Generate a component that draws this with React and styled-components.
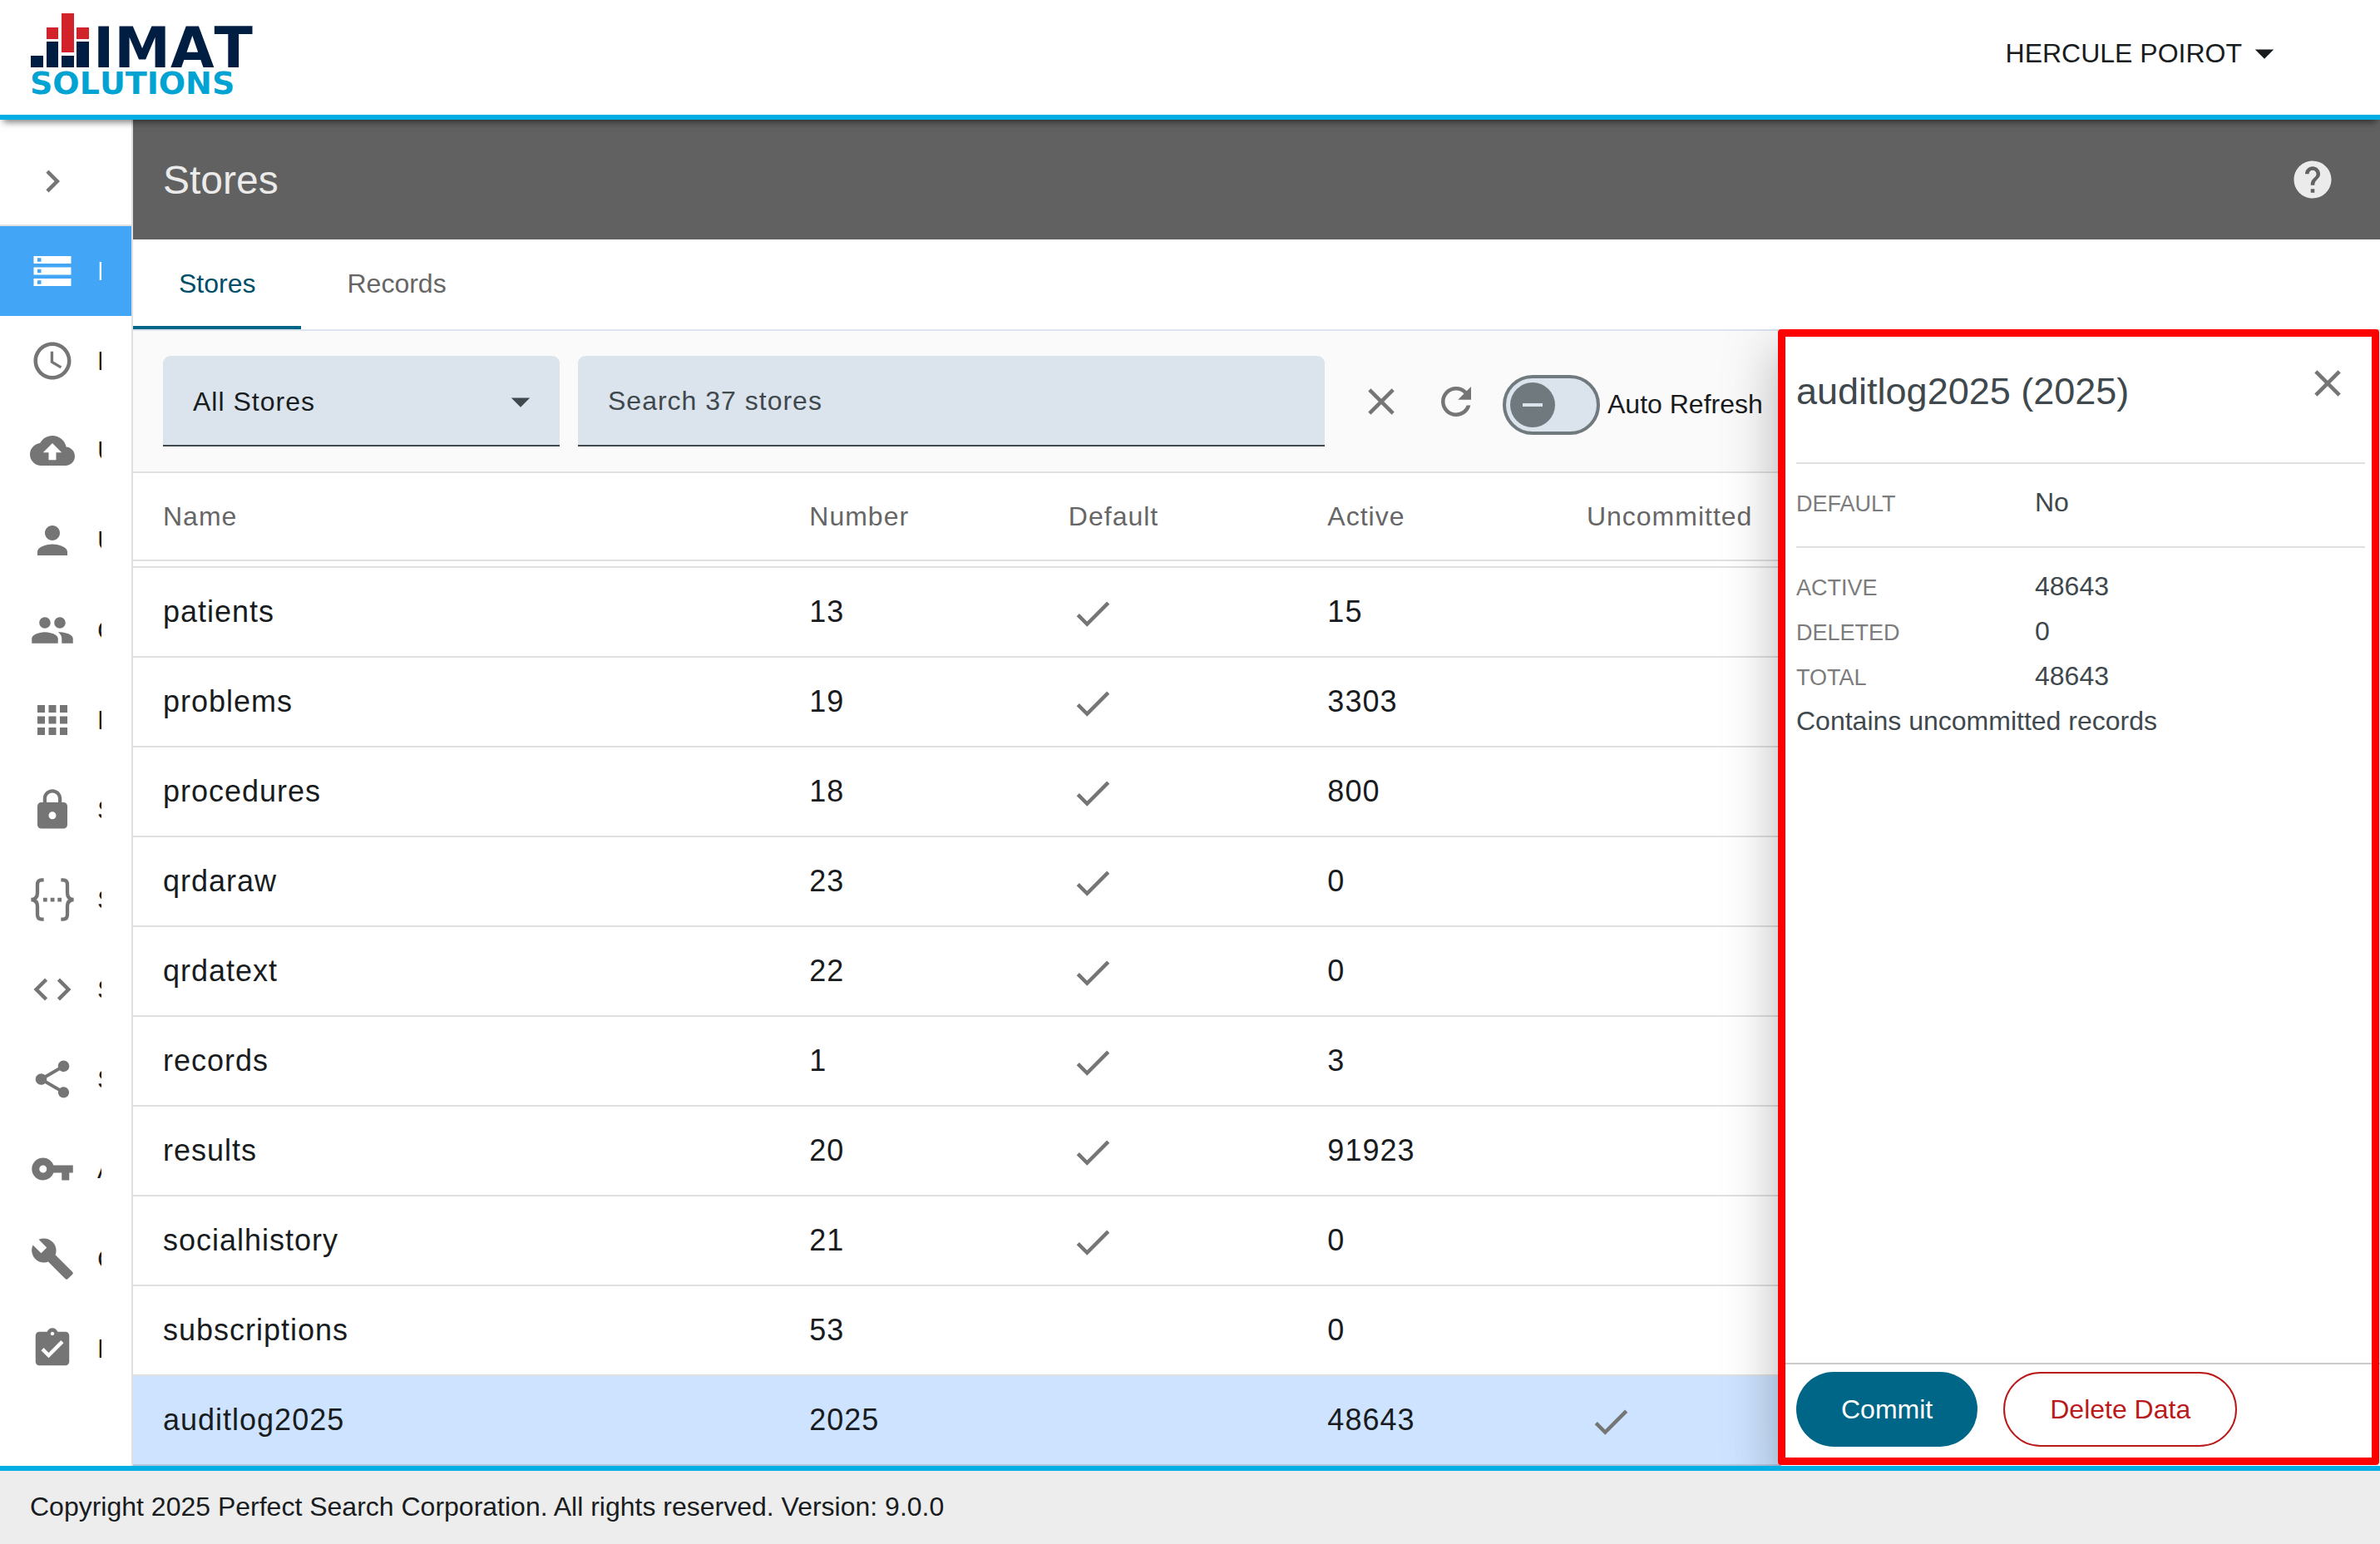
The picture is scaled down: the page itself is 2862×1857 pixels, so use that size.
import { useState } from "react";
import styled, { createGlobalStyle, css } from "styled-components";
import {
  MdAccessTime,
  MdApps,
  MdArrowDropDown,
  MdAssignmentTurnedIn,
  MdBuild,
  MdCheck,
  MdChevronRight,
  MdClose,
  MdCloudUpload,
  MdCode,
  MdHelp,
  MdLock,
  MdPeople,
  MdPerson,
  MdRefresh,
  MdShare,
  MdStorage,
  MdVpnKey,
} from "react-icons/md";

const GlobalStyles = createGlobalStyle`
  :root {
    --color-text: #191c1e;
    --color-text-soft: #3f484d;
    --color-label: #7c7c7c;
    --color-icon: #757575;
    --color-line: #e0e0e0;
    --color-field: #dbe4ec;
    --color-brand: #00aee3;
    --color-primary: #006687;
    --color-danger: #ba1a1a;
  }

  *,
  *::before,
  *::after {
    box-sizing: border-box;
  }

  body {
    margin: 0;
    background-color: #fff;
    color: var(--color-text);
    font-family: "Liberation Sans", Arial, sans-serif;
    font-size: 32px;
  }

  button,
  input,
  select {
    margin: 0;
    padding: 0;
    border: none;
    background: none;
    color: inherit;
    font: inherit;
    cursor: pointer;
  }
`;

const StyledApp = styled.div`
  display: flex;
  flex-direction: column;
  min-height: 100vh;
`;

const Header = styled.header`
  position: relative;
  z-index: 2;
  display: flex;
  justify-content: space-between;
  height: 144px;
  padding: 0 112px 0 36px;
  border-bottom: 6px solid var(--color-brand);
  background-color: #fff;
  box-shadow: 0 7px 8px -4px rgba(0, 0, 0, 0.5);
`;

const LogoLink = styled.a`
  display: flex;
  align-items: center;
`;

const UserButton = styled.button`
  display: flex;
  align-items: center;
  height: 128px;
`;

const Body = styled.div`
  display: flex;
  flex: 1;
`;

const Sidebar = styled.nav`
  flex-shrink: 0;
  width: 160px;
  border-right: 2px solid var(--color-line);
`;

const ExpandButton = styled.button`
  display: flex;
  align-items: center;
  width: 100%;
  height: 128px;
  padding: 22px 0 0 36px;
  border-bottom: 2px solid var(--color-line);
  color: var(--color-icon);
`;

const NavLink = styled.a`
  display: flex;
  align-items: center;
  gap: 27px;
  height: 108px;
  padding: 0 36px;
  color: var(--color-text);
  text-decoration: none;

  svg {
    flex-shrink: 0;
    color: var(--color-icon);
  }

  ${(props) =>
    props.$active &&
    css`
      background-color: #42a5f5;
      color: #fff;

      svg {
        color: #fff;
      }
    `}
`;

const NavText = styled.span`
  flex: 1;
  min-width: 0;
  overflow: hidden;
`;

const Content = styled.main`
  display: flex;
  flex: 1;
  flex-direction: column;
  min-width: 0;
`;

const TitleBar = styled.div`
  display: flex;
  align-items: center;
  justify-content: space-between;
  height: 144px;
  padding: 0 54px 0 36px;
  background-color: #616161;
  color: #ebebeb;
`;

const Title = styled.h1`
  margin: 0;
  font-size: 48px;
  font-weight: 400;
`;

const PlainButton = styled.button`
  display: flex;
`;

const Tabs = styled.div`
  display: flex;
  height: 110px;
  border-bottom: 2px solid var(--color-field);
`;

const Tab = styled.button`
  padding: 0 55px 2px;
  border-top: 4px solid transparent;
  border-bottom: 4px solid
    ${(props) => (props.$active ? "var(--color-primary)" : "transparent")};
  color: ${(props) => (props.$active ? "#004e68" : "#666")};
`;

const Workspace = styled.section`
  position: relative;
  flex: 1;
`;

const Toolbar = styled.div`
  display: flex;
  align-items: center;
  height: 171px;
  padding: 0 36px;
  border-bottom: 2px solid var(--color-line);
  background-color: #fafafa;
`;

const fieldStyles = css`
  height: 109px;
  padding: 2px 36px 0;
  border-bottom: 2px solid var(--color-text-soft);
  border-radius: 9px 9px 0 0;
  background-color: var(--color-field);
  letter-spacing: 1px;
`;

const SelectBox = styled.div`
  display: grid;
  flex: 0 1 477px;
  align-items: center;
  margin-right: 22px;

  & > * {
    grid-area: 1 / 1;
  }

  svg {
    justify-self: end;
    margin-right: 20px;
    color: var(--color-text-soft);
    pointer-events: none;
  }
`;

const Select = styled.select`
  ${fieldStyles}
  width: 100%;
  appearance: none;
`;

const SearchInput = styled.input`
  ${fieldStyles}
  flex: 0 1 898px;
  min-width: 0;
  margin-right: 23px;
  cursor: text;

  &::placeholder {
    color: var(--color-text-soft);
    opacity: 1;
  }
`;

const IconButton = styled.button`
  display: flex;
  flex: 0 0 90px;
  align-items: center;
  justify-content: center;
  height: 90px;
  color: var(--color-icon);
`;

const SwitchLabel = styled.label`
  display: flex;
  align-items: center;
  gap: 9px;
  margin-left: 11px;
  padding-top: 8px;
  white-space: nowrap;
  cursor: pointer;
`;

const Switch = styled.input`
  display: flex;
  align-items: center;
  width: 117px;
  height: 72px;
  padding: 0 5px;
  border: 4px solid #6f797e;
  border-radius: 36px;
  background-color: var(--color-field);
  appearance: none;

  &::before {
    content: "";
    width: 54px;
    height: 54px;
    border-radius: 50%;
    background: linear-gradient(var(--color-field), var(--color-field)) center /
      24px 4px no-repeat #6f797e;
  }

  &:checked {
    justify-content: flex-end;
  }
`;

const Table = styled.table`
  width: 100%;
  border-spacing: 0;
  table-layout: fixed;
`;

const HeadCell = styled.th`
  width: ${(props) => props.$width};
  height: 106px;
  padding: 0;
  border-bottom: 2px solid var(--color-line);
  color: #666;
  font-weight: 400;
  letter-spacing: 1px;
  text-align: left;

  &:first-child {
    padding-left: 36px;
  }
`;

const Row = styled.tr`
  background-color: ${(props) => (props.$selected ? "#cde3ff" : "#fff")};
`;

const Cell = styled.td`
  height: 108px;
  padding: 0;
  border-bottom: 2px solid rgba(0, 0, 0, 0.12);
  font-size: 36px;
  letter-spacing: 1px;

  &:first-child {
    padding-left: 36px;
  }

  svg {
    display: block;
    margin: 4px 0 0 2px;
    color: var(--color-icon);
  }
`;

// What is left of the row scrolled under the table head
const ScrolledCell = styled.td`
  height: 8px;
  padding: 0;
  border-bottom: 2px solid var(--color-line);
`;

const Panel = styled.aside`
  position: absolute;
  top: 0;
  right: 0;
  bottom: 0;
  display: flex;
  flex-direction: column;
  width: 720px;
  background-color: #fff;
  box-shadow: 0 18px 22px -11px rgba(0, 0, 0, 0.2),
    0 36px 54px 4px rgba(0, 0, 0, 0.14), 0 14px 68px 11px rgba(0, 0, 0, 0.12);
  clip-path: inset(-2px 0 0 -120px);
  color: var(--color-text-soft);

  &::after {
    content: "";
    position: absolute;
    inset: -2px 1px 1px -4px;
    border: 9px solid #f00;
    border-radius: 4px;
    pointer-events: none;
  }
`;

const PanelBody = styled.div`
  flex: 1;
  padding: 0 18px;
`;

const PanelHeader = styled.div`
  display: flex;
  align-items: flex-start;
  justify-content: space-between;
  height: 160px;
  padding: 36px 18px 0 0;
  border-bottom: 2px solid var(--color-line);

  button {
    color: var(--color-icon);
  }
`;

const PanelTitle = styled.h2`
  margin: 0;
  padding-top: 10px;
  font-size: 45px;
  font-weight: 400;
  line-height: 54px;
`;

const Details = styled.dl`
  margin: 0;
  padding-top: 19px;

  &:not(:last-of-type) {
    padding-bottom: 26px;
    border-bottom: 2px solid var(--color-line);
  }
`;

const Detail = styled.div`
  display: grid;
  grid-template-columns: 287px 1fr;
  align-items: center;
  height: 54px;

  dt {
    padding-top: 5px;
    color: var(--color-label);
    font-size: 27px;
  }

  dd {
    margin: 0;
  }
`;

const Note = styled.p`
  margin: 0;
  line-height: 54px;
`;

const PanelFooter = styled.div`
  display: flex;
  gap: 31px;
  height: 124px;
  padding: 9px 18px;
  border-top: 2px solid #c8cacb;
`;

const Button = styled.button`
  height: 90px;
  padding: 0 54px;
  border-radius: 45px;
  background-color: var(--color-primary);
  color: #fff;
  white-space: nowrap;

  ${(props) =>
    props.$variant === "danger" &&
    css`
      border: 2px solid var(--color-danger);
      background-color: #fff;
      color: var(--color-danger);
    `}
`;

const Footer = styled.footer`
  position: relative;
  display: flex;
  align-items: center;
  height: 94px;
  padding: 0 36px 2px;
  border-top: 6px solid var(--color-brand);
  background-color: #ededed;
`;

const LogoText = styled.text`
  font-family: "DejaVu Sans", Verdana, sans-serif;
  font-weight: 700;
  font-kerning: none;
`;

function Logo() {
  return (
    <svg width="276" height="118" viewBox="36 10 276 118" role="img">
      <g fill="#d2232a">
        <path d="M56 33h14v14H56zM74 16h15v47H74zM92 33h15v14H92z" />
      </g>
      <g fill="#001e42">
        <path d="M37 67h15v14H37zM56 50h14v31H56zM74 67h15v14H74zM92 50h15v31H92z" />
        <LogoText x="112" y="81" fontSize="68">
          IMAT
        </LogoText>
      </g>
      <LogoText x="36" y="113" fontSize="38" fill="#00a3d1">
        SOLUTIONS
      </LogoText>
    </svg>
  );
}

function BracesIcon({ size }) {
  return (
    <svg width={size} height={size} viewBox="0 0 24 24" fill="none">
      <g stroke="currentColor" strokeWidth="1.9">
        <path d="M7.4 1.5H6.3C4.6 1.5 4 2.4 4 4v4.4c0 2.2-1 3.4-3.3 3.6 2.3.2 3.3 1.4 3.3 3.6V20c0 1.6.6 2.5 2.3 2.5h1.1" />
        <path d="M16.6 1.5h1.1C19.4 1.5 20 2.4 20 4v4.4c0 2.2 1 3.4 3.3 3.6-2.3.2-3.3 1.4-3.3 3.6V20c0 1.6-.6 2.5-2.3 2.5h-1.1" />
      </g>
      <path
        fill="currentColor"
        d="M7.1 11h2.1v2.1H7.1zM11 11h2.1v2.1H11zM14.8 11h2.1v2.1h-2.1z"
      />
    </svg>
  );
}

const ICON_SIZE = 54;

const navItems = [
  { text: "D", Icon: MdStorage },
  { text: "H", Icon: MdAccessTime },
  { text: "U", Icon: MdCloudUpload },
  { text: "U", Icon: MdPerson },
  { text: "G", Icon: MdPeople },
  { text: "F", Icon: MdApps },
  { text: "S", Icon: MdLock },
  { text: "S", Icon: BracesIcon },
  { text: "S", Icon: MdCode },
  { text: "S", Icon: MdShare },
  { text: "A", Icon: MdVpnKey },
  { text: "C", Icon: MdBuild },
  { text: "R", Icon: MdAssignmentTurnedIn },
];

const columns = [
  { name: "Name", width: "30.1%" },
  { name: "Number", width: "11.53%" },
  { name: "Default", width: "11.53%" },
  { name: "Active", width: "11.53%" },
  { name: "Uncommitted", width: "auto" },
];

const stores = [
  { name: "patients", number: 13, isDefault: true, active: 15 },
  { name: "problems", number: 19, isDefault: true, active: 3303 },
  { name: "procedures", number: 18, isDefault: true, active: 800 },
  { name: "qrdaraw", number: 23, isDefault: true, active: 0 },
  { name: "qrdatext", number: 22, isDefault: true, active: 0 },
  { name: "records", number: 1, isDefault: true, active: 3 },
  { name: "results", number: 20, isDefault: true, active: 91923 },
  { name: "socialhistory", number: 21, isDefault: true, active: 0 },
  { name: "subscriptions", number: 53, active: 0 },
  { name: "auditlog2025", number: 2025, active: 48643, uncommitted: true },
];

function StoreRow({ store, selected, onSelect }) {
  const { name, number, isDefault, active, uncommitted } = store;

  return (
    <Row $selected={selected} onClick={onSelect}>
      <Cell>{name}</Cell>
      <Cell>{number}</Cell>
      <Cell>{isDefault && <MdCheck size={ICON_SIZE} />}</Cell>
      <Cell>{active}</Cell>
      <Cell>{uncommitted && <MdCheck size={ICON_SIZE} />}</Cell>
    </Row>
  );
}

function StorePanel({ store, onClose }) {
  return (
    <Panel>
      <PanelBody>
        <PanelHeader>
          <PanelTitle>
            {store.name} ({store.number})
          </PanelTitle>
          <PlainButton aria-label="Close" onClick={onClose}>
            <MdClose size={ICON_SIZE} />
          </PlainButton>
        </PanelHeader>
        <Details>
          <Detail>
            <dt>DEFAULT</dt>
            <dd>{store.isDefault ? "Yes" : "No"}</dd>
          </Detail>
        </Details>
        <Details>
          <Detail>
            <dt>ACTIVE</dt>
            <dd>{store.active}</dd>
          </Detail>
          <Detail>
            <dt>DELETED</dt>
            <dd>0</dd>
          </Detail>
          <Detail>
            <dt>TOTAL</dt>
            <dd>{store.active}</dd>
          </Detail>
        </Details>
        {store.uncommitted && <Note>Contains uncommitted records</Note>}
      </PanelBody>
      <PanelFooter>
        <Button>Commit</Button>
        <Button $variant="danger">Delete Data</Button>
      </PanelFooter>
    </Panel>
  );
}

function App() {
  const [selected, setSelected] = useState("auditlog2025");
  const [search, setSearch] = useState("");
  const [autoRefresh, setAutoRefresh] = useState(false);

  const selectedStore = stores.find((store) => store.name === selected);

  return (
    <>
      <GlobalStyles />
      <StyledApp>
        <Header>
          <LogoLink href="#" aria-label="IMAT Solutions">
            <Logo />
          </LogoLink>
          <UserButton>
            HERCULE POIROT
            <MdArrowDropDown size={ICON_SIZE} />
          </UserButton>
        </Header>

        <Body>
          <Sidebar>
            <ExpandButton aria-label="Expand">
              <MdChevronRight size={ICON_SIZE} />
            </ExpandButton>
            {navItems.map(({ text, Icon }, i) => (
              <NavLink key={i} href="#" $active={i === 0}>
                <Icon size={ICON_SIZE} />
                <NavText>{text}</NavText>
              </NavLink>
            ))}
          </Sidebar>

          <Content>
            <TitleBar>
              <Title>Stores</Title>
              <PlainButton aria-label="Help">
                <MdHelp size={ICON_SIZE} />
              </PlainButton>
            </TitleBar>
            <Tabs role="tablist">
              <Tab role="tab" aria-selected="true" $active>
                Stores
              </Tab>
              <Tab role="tab" aria-selected="false">
                Records
              </Tab>
            </Tabs>

            <Workspace>
              <Toolbar>
                <SelectBox>
                  <Select aria-label="Stores">
                    <option>All Stores</option>
                  </Select>
                  <MdArrowDropDown size={ICON_SIZE} />
                </SelectBox>
                <SearchInput
                  type="text"
                  aria-label="Search"
                  placeholder="Search 37 stores"
                  value={search}
                  onChange={(e) => setSearch(e.target.value)}
                />
                <IconButton aria-label="Clear" onClick={() => setSearch("")}>
                  <MdClose size={ICON_SIZE} />
                </IconButton>
                <IconButton aria-label="Refresh">
                  <MdRefresh size={ICON_SIZE} />
                </IconButton>
                <SwitchLabel>
                  <Switch
                    type="checkbox"
                    role="switch"
                    checked={autoRefresh}
                    onChange={() => setAutoRefresh((on) => !on)}
                  />
                  Auto Refresh
                </SwitchLabel>
              </Toolbar>

              <Table>
                <thead>
                  <tr>
                    {columns.map(({ name, width }) => (
                      <HeadCell key={name} scope="col" $width={width}>
                        {name}
                      </HeadCell>
                    ))}
                  </tr>
                </thead>
                <tbody>
                  <tr aria-hidden="true">
                    <ScrolledCell colSpan={columns.length} />
                  </tr>
                  {stores.map((store) => (
                    <StoreRow
                      key={store.name}
                      store={store}
                      selected={store.name === selected}
                      onSelect={() => setSelected(store.name)}
                    />
                  ))}
                </tbody>
              </Table>

              {selectedStore && (
                <StorePanel
                  store={selectedStore}
                  onClose={() => setSelected(null)}
                />
              )}
            </Workspace>
          </Content>
        </Body>

        <Footer>
          Copyright 2025 Perfect Search Corporation. All rights reserved.
          Version: 9.0.0
        </Footer>
      </StyledApp>
    </>
  );
}

export default App;
